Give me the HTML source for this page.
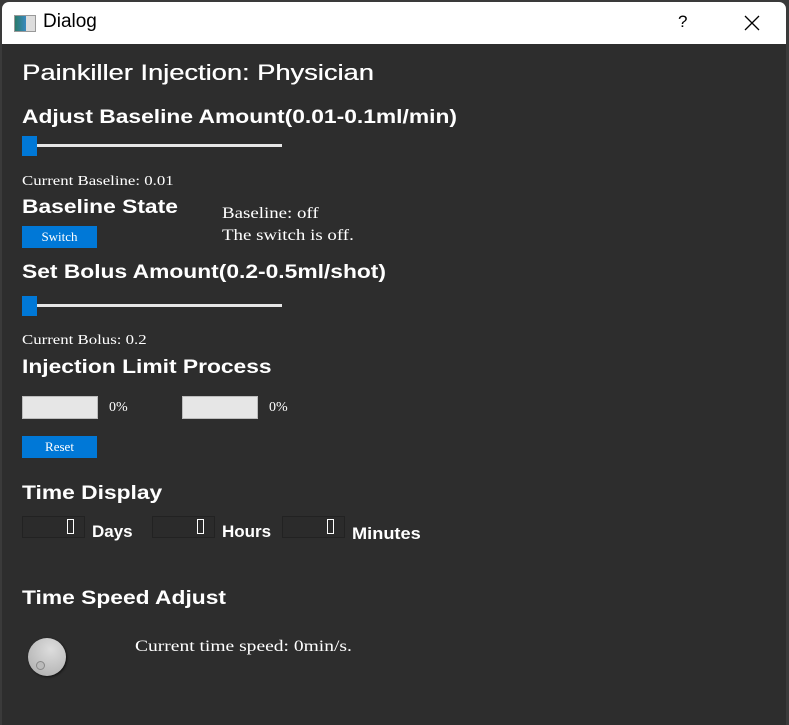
<!DOCTYPE html>
<html><head><style>
html,body{margin:0;padding:0;width:789px;height:725px;background:#3a3a3a;overflow:hidden}
#win{position:absolute;left:2px;top:2px;width:784px;height:723px;background:#2d2d2d;border-radius:7px 7px 0 0;overflow:hidden}
#tb{position:absolute;left:0;top:0;width:784px;height:42px;background:#fff}
.t{position:absolute;white-space:nowrap;color:#fff;transform-origin:0 0}
.h{font-family:"Liberation Sans",sans-serif;font-weight:bold;font-size:19px;transform:scaleX(1.2)}
.s{font-family:"Liberation Serif",serif;font-size:14px;transform:scaleX(1.2)}
.m{font-family:"Liberation Serif",serif;font-size:16px;transform:scaleX(1.18)}
.btn{position:absolute;background:#0078d7;color:#fff;font-family:"Liberation Serif",serif;font-size:13px;text-align:center;line-height:22px;height:22px;width:75px}
.track{position:absolute;height:3px;background:#e6e6e6;width:254px}
.thumb{position:absolute;width:15px;height:20px;background:#0078d7}
.pb{position:absolute;width:76px;height:23px;background:#e6e6e6;border:1px solid #bcbcbc;box-sizing:border-box}
.lcd{position:absolute;width:63px;height:22px;border:1px solid #222;box-sizing:border-box;background:#2b2b2b}
.lcd i{position:absolute;right:10px;top:2px;width:7px;height:15px;border:1px solid #fff;box-sizing:border-box}
</style></head><body>
<div id="win">
<div id="tb">
 <div style="position:absolute;left:12px;top:13px;width:20px;height:15px;border:1px solid #999;background:linear-gradient(90deg,#2a7a6a 0,#3a8ac0 55%,#ddd 56%)"></div>
 <div class="t" style="left:41px;top:9px;color:#000;font-family:'Liberation Sans',sans-serif;font-size:19px">Dialog</div>
 <div class="t" style="left:676px;top:10px;color:#000;font-family:'Liberation Sans',sans-serif;font-size:17px">?</div>
 <svg style="position:absolute;left:742px;top:13px" width="16" height="16"><path d="M1 1L15 15M15 1L1 15" stroke="#000" stroke-width="1.3"/></svg>
</div>
<div class="t" style="left:20px;top:58px;font-family:'Liberation Sans',sans-serif;font-size:22px;transform:scaleX(1.24);font-weight:500;text-shadow:0.3px 0 0 #fff">Painkiller Injection: Physician</div>
<div class="t h" style="left:20px;top:105px">Adjust Baseline Amount(0.01-0.1ml/min)</div>
<div class="track" style="left:26px;top:142px"></div>
<div class="thumb" style="left:20px;top:134px"></div>
<div class="t s" style="left:20px;top:172px">Current Baseline: 0.01</div>
<div class="t h" style="left:20px;top:195px">Baseline State</div>
<div class="t m" style="left:220px;top:203px">Baseline: off</div>
<div class="t m" style="left:220px;top:225px">The switch is off.</div>
<div class="btn" style="left:20px;top:224px">Switch</div>
<div class="t h" style="left:20px;top:260px">Set Bolus Amount(0.2-0.5ml/shot)</div>
<div class="track" style="left:26px;top:302px"></div>
<div class="thumb" style="left:20px;top:294px"></div>
<div class="t s" style="left:20px;top:331px">Current Bolus: 0.2</div>
<div class="t h" style="left:20px;top:355px">Injection Limit Process</div>
<div class="pb" style="left:20px;top:394px"></div>
<div class="t s" style="left:107px;top:398px;font-size:14px;transform:none">0%</div>
<div class="pb" style="left:180px;top:394px"></div>
<div class="t s" style="left:267px;top:398px;font-size:14px;transform:none">0%</div>
<div class="btn" style="left:20px;top:434px">Reset</div>
<div class="t h" style="left:20px;top:481px">Time Display</div>
<div class="lcd" style="left:20px;top:514px"><i></i></div>
<div class="t h" style="left:90px;top:520px;font-size:17px;transform:none">Days</div>
<div class="lcd" style="left:150px;top:514px"><i></i></div>
<div class="t h" style="left:220px;top:520px;font-size:17px;transform:none">Hours</div>
<div class="lcd" style="left:280px;top:514px"><i></i></div>
<div class="t h" style="left:350px;top:522px;font-size:17px;transform:scaleX(1.07)">Minutes</div>
<div class="t h" style="left:20px;top:586px">Time Speed Adjust</div>
<div style="position:absolute;left:26px;top:636px;width:38px;height:38px;border-radius:50%;background:radial-gradient(circle at 60% 30%,#ddd,#aaa);box-shadow:1px 1px 2px #111"></div>
<div style="position:absolute;left:34px;top:659px;width:7px;height:7px;border-radius:50%;border:1px solid #888;background:#bbb"></div>
<div class="t m" style="left:133px;top:636px;transform:scaleX(1.22)">Current time speed: 0min/s.</div>
</div>
</body></html>
